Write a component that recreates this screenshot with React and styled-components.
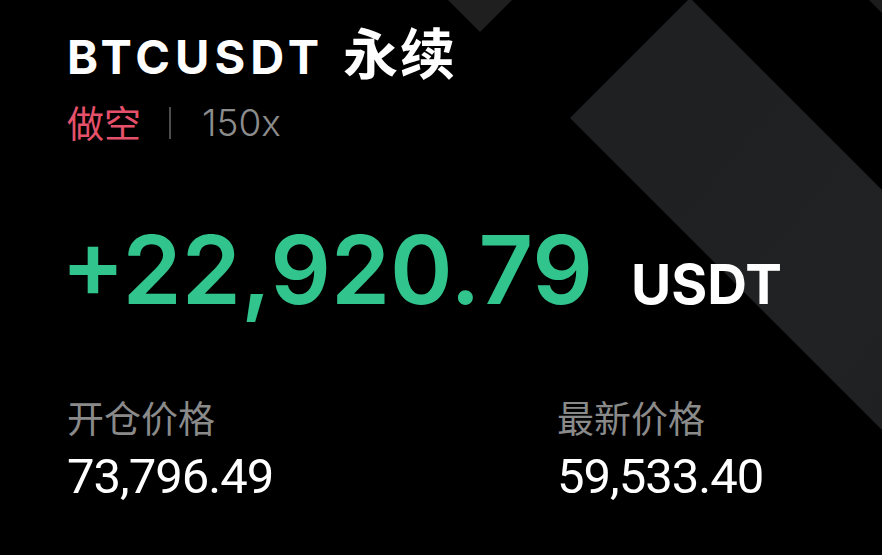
import styled, { createGlobalStyle } from "styled-components";

const GlobalStyle = createGlobalStyle`
  html, body {
    margin: 0;
    padding: 0;
    background: #000;
  }
`;

const position = {
  pair: "BTCUSDT",
  kind: "永续",
  side: "做空",
  leverage: "150x",
  pnl: "+22,920.79",
  unit: "USDT",
  stats: [
    { label: "开仓价格", value: "73,796.49" },
    { label: "最新价格", value: "59,533.40" },
  ],
};

// diagonal strips behind the card content
function Backdrop() {
  return (
    <Decor viewBox="0 0 882 555" preserveAspectRatio="none" aria-hidden="true">
      <defs>
        <linearGradient id="band" x1="0" y1="0" x2="1" y2="1">
          <stop offset="0" stopColor="#1e1f20" />
          <stop offset="0.5" stopColor="#212223" />
          <stop offset="1" stopColor="#1b1b1b" />
        </linearGradient>
      </defs>
      <polygon points="448,0 512,0 480,32" fill="#1f1f1f" />
      <polygon points="869,0 882,0 882,13" fill="#1c1c1c" />
      <polygon points="690,-2 570,118 1100,648 1100,408" fill="url(#band)" />
    </Decor>
  );
}

function App() {
  return (
    <>
      <GlobalStyle />
      <Card>
        <Backdrop />
        <Content>
          <Title>
            {position.pair}
            <Cjk>{position.kind}</Cjk>
          </Title>
          <Meta>
            <Side>{position.side}</Side>
            <Divider />
            <Leverage>{position.leverage}</Leverage>
          </Meta>
          <PnlRow>
            <Pnl>{position.pnl}</Pnl>
            <Unit>{position.unit}</Unit>
          </PnlRow>
          <Stats>
            {position.stats.map((s) => (
              <Stat key={s.label}>
                <Label>{s.label}</Label>
                <Value>{s.value}</Value>
              </Stat>
            ))}
          </Stats>
        </Content>
      </Card>
    </>
  );
}

const Card = styled.div`
  position: relative;
  width: 882px;
  height: 555px;
  overflow: hidden;
  background: #000;
`;

const Decor = styled.svg`
  position: absolute;
  inset: 0;
  width: 100%;
  height: 100%;
`;

const Content = styled.div`
  position: relative;
  display: flex;
  flex-direction: column;
  padding: 26px 0 0 67px;
`;

const Title = styled.h1`
  display: flex;
  align-items: baseline;
  margin: 0;
  height: 48px;
  font-family: Inter, sans-serif;
  font-size: 47px;
  line-height: 48px;
  font-weight: 700;
  letter-spacing: 5px;
  color: #fff;
`;

const Cjk = styled.span`
  margin-left: 19px;
  font-family: "Noto Sans CJK SC", sans-serif;
  font-size: 55px;
  letter-spacing: 2px;
`;

const Meta = styled.div`
  display: flex;
  align-items: center;
  height: 37px;
  margin-top: 30px;
`;

const Side = styled.span`
  font-family: "Noto Sans CJK SC", sans-serif;
  font-size: 37px;
  line-height: 37px;
  color: #e5506a;
`;

const Divider = styled.span`
  width: 2px;
  height: 32px;
  margin: 0 31px 0 28px;
  background: #4d4d4d;
`;

const Leverage = styled.span`
  font-family: Inter, sans-serif;
  font-size: 37px;
  line-height: 37px;
  font-weight: 300;
  color: #8c8c8c;
`;

const PnlRow = styled.div`
  display: flex;
  align-items: baseline;
  gap: 38px;
  margin: 81px 0 0 -6px;
`;

const Pnl = styled.span`
  font-family: Inter, sans-serif;
  font-size: 95px;
  line-height: 95px;
  font-weight: 600;
  color: #31c48d;
`;

const Unit = styled.span`
  font-family: Inter, sans-serif;
  font-size: 55px;
  font-weight: 700;
  color: #fff;
`;

const Stats = styled.div`
  display: grid;
  grid-template-columns: 490px 1fr;
  margin-top: 82px;
`;

const Stat = styled.div`
  display: flex;
  flex-direction: column;
  gap: 16px;
`;

const Label = styled.span`
  font-family: "Noto Sans CJK SC", sans-serif;
  font-size: 37px;
  line-height: 37px;
  color: #8a8a8a;
`;

const Value = styled.span`
  font-family: Roboto, sans-serif;
  font-size: 49px;
  line-height: 49px;
  letter-spacing: -1px;
  color: #fff;
`;

export default App;
